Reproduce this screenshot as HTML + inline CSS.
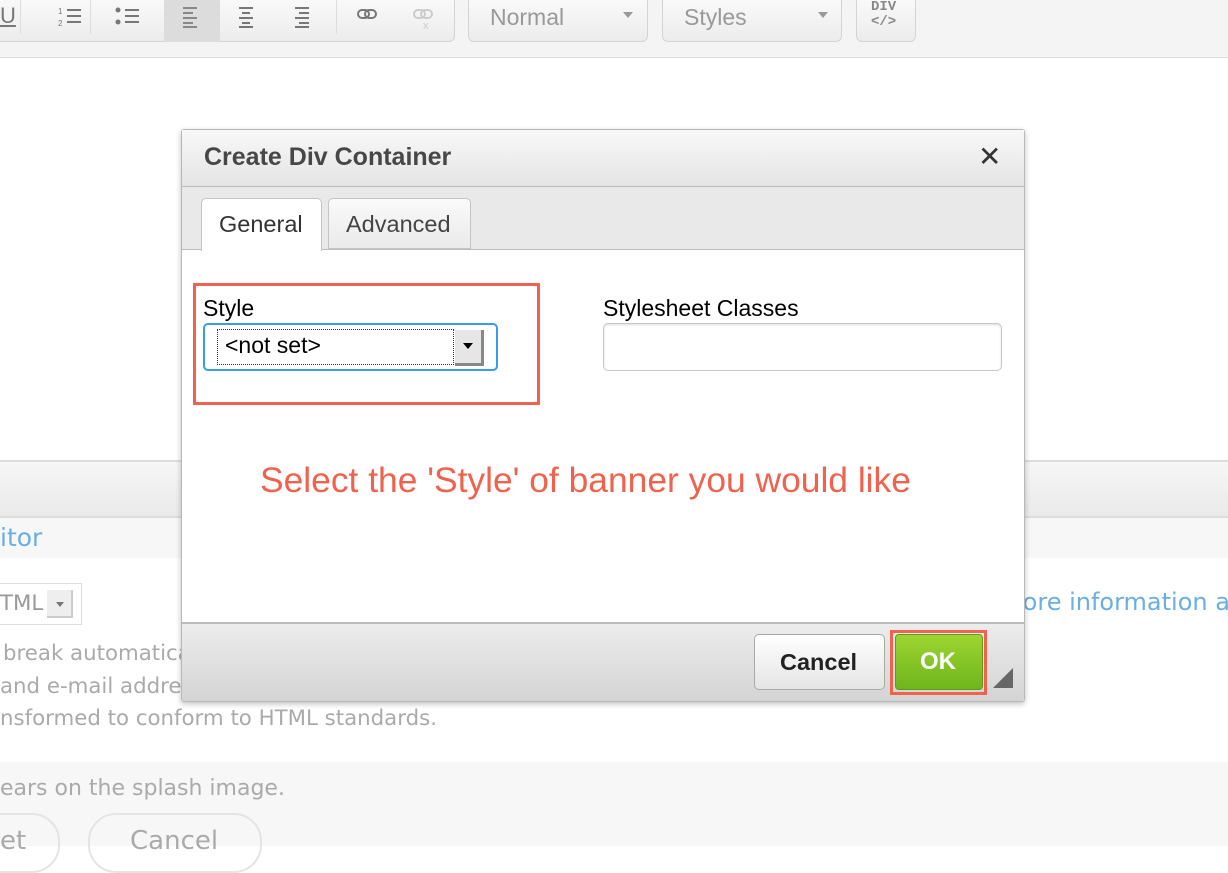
<!DOCTYPE html>
<html><head><style>
*{box-sizing:border-box;margin:0;padding:0}
body{width:1228px;height:846px;overflow:hidden;position:relative;background:#fff;font-family:"Liberation Sans",Arial,sans-serif}
.a{position:absolute}
.grp{position:absolute;top:-4px;height:46px;border:1px solid #d4d4d4;border-radius:0 0 6px 6px;background:linear-gradient(#fafafa,#ececec)}
.bg{color:#aaa;font-family:"DejaVu Sans",sans-serif;font-size:21.3px;white-space:nowrap}
</style></head><body>
<!-- toolbar -->
<div class="a" style="left:0;top:0;width:1228px;height:58px;background:#f4f4f4;border-bottom:1px solid #ddd"></div>
<div class="grp" style="left:-10px;width:465px"></div>
<div class="a" style="left:0;top:3px;font-size:22px;color:#777;text-decoration:underline">U</div>
<div class="a" style="left:20px;top:0;width:1px;height:34px;background:#ddd"></div>
<div class="a" style="left:90px;top:0;width:1px;height:34px;background:#ddd"></div>
<div class="a" style="left:164px;top:0;width:56px;height:42px;background:#dcdcdc"></div>
<div class="a" style="left:336px;top:0;width:1px;height:34px;background:#ddd"></div>
<svg class="a" style="left:55px;top:4px" width="400" height="26">
<g stroke="#777" stroke-width="2">
<path d="M12 6h14M12 12h14M12 18h14"/><path d="M70 6h14M70 12h14M70 18h14"/>
<path d="M128 4h14M128 9h10M128 14h14M128 19h10M128 23h14" stroke="#888"/>
<path d="M184 4h14M187 9h8M184 14h14M187 19h8M184 23h14"/>
<path d="M240 4h14M244 9h10M240 14h14M244 19h10M240 23h14"/>
</g>
<circle cx="63" cy="6" r="2.5" fill="#777"/><circle cx="63" cy="18" r="2.5" fill="#777"/>
<text x="3" y="10" font-size="8" fill="#777">1</text><text x="3" y="22" font-size="8" fill="#777">2</text>
<g fill="none" stroke="#777" stroke-width="2"><rect x="303" y="6" width="11" height="8" rx="4"/><rect x="310" y="6" width="11" height="8" rx="4"/></g>
<g fill="none" stroke="#ccc" stroke-width="2"><rect x="359" y="6" width="11" height="8" rx="4"/><rect x="366" y="6" width="11" height="8" rx="4"/></g>
<text x="368" y="25" font-size="11" fill="#ccc">x</text>
</svg>
<div class="grp" style="left:468px;width:180px"></div>
<div class="a" style="left:490px;top:4px;font-size:23px;color:#999">Normal</div>
<div class="a" style="left:623px;top:12px;border:5px solid transparent;border-top:6px solid #999"></div>
<div class="grp" style="left:662px;width:180px"></div>
<div class="a" style="left:684px;top:4px;font-size:23px;color:#999">Styles</div>
<div class="a" style="left:818px;top:12px;border:5px solid transparent;border-top:6px solid #999"></div>
<div class="grp" style="left:856px;width:60px"></div>
<div class="a" style="left:871px;top:0;font-size:14px;line-height:15px;color:#888;font-family:'Liberation Mono',monospace;text-align:center;font-weight:bold">DIV<br>&lt;/&gt;</div>
<!-- lower bg -->
<div class="a" style="left:0;top:460px;width:1228px;height:58px;background:linear-gradient(#f6f6f6,#eaeaea);border-top:2px solid #ddd;border-bottom:2px solid #ddd"></div>
<div class="a" style="left:0;top:518px;width:1228px;height:40px;background:#f7f7f7"></div>
<div class="a" style="left:0;top:523px;font-size:25px;color:#6aafe0;font-family:'DejaVu Sans',sans-serif">itor</div>
<div class="a" style="left:1016px;top:588px;font-size:24px;color:#6aafe0;font-family:'DejaVu Sans',sans-serif;white-space:nowrap">lore information a</div>
<div class="a" style="left:-4px;top:583px;width:86px;height:42px;border:1px solid #ddd"></div>
<div class="a bg" style="left:0;top:591px;color:#999">TML</div>
<div class="a" style="left:47px;top:590px;width:26px;height:28px;background:#eee;border-right:2px solid #ccc;border-bottom:2px solid #ccc"></div>
<div class="a" style="left:56px;top:602px;border:4px solid transparent;border-top:5px solid #777"></div>
<div class="a bg" style="left:3px;top:641px">break automatica</div>
<div class="a bg" style="left:0;top:674px">and e-mail addres</div>
<div class="a bg" style="left:0;top:706px">nsformed to conform to HTML standards.</div>
<div class="a" style="left:0;top:762px;width:1228px;height:84px;background:#f7f7f7"></div>
<div class="a bg" style="left:0;top:776px;font-size:22px">ears on the splash image.</div>
<div class="a" style="left:-60px;top:813px;width:120px;height:60px;border:2px solid #e4e4e4;border-radius:28px"></div>
<div class="a" style="left:88px;top:813px;width:174px;height:60px;border:2px solid #e4e4e4;border-radius:28px"></div>
<div class="a bg" style="left:0;top:826px;font-size:26px">et</div>
<div class="a bg" style="left:130px;top:826px;font-size:26px">Cancel</div>
<!-- dialog -->
<div class="a" style="left:181px;top:129px;width:844px;height:573px;border:1px solid #b8b8b8;box-shadow:0 2px 6px rgba(0,0,0,.25);background:#fff;border-radius:3px"></div>
<div class="a" style="left:182px;top:130px;width:842px;height:57px;background:linear-gradient(#f8f8f8,#e4e4e4);border-bottom:1px solid #bbb"></div>
<div class="a" style="left:204px;top:143px;font-size:25px;font-weight:bold;color:#474747;white-space:nowrap">Create Div Container</div>
<div class="a" style="left:978px;top:140px;font-size:28px;font-weight:bold;color:#333;font-family:'DejaVu Sans',sans-serif">✕</div>
<div class="a" style="left:182px;top:187px;width:842px;height:63px;background:#e9e9e9;border-bottom:1px solid #bbb"></div>
<div class="a" style="left:201px;top:198px;width:121px;height:53px;background:#fff;border:1px solid #c4c4c4;border-bottom:none;border-radius:5px 5px 0 0"></div>
<div class="a" style="left:219px;top:211px;font-size:23.5px;color:#333">General</div>
<div class="a" style="left:328px;top:198px;width:143px;height:51px;background:linear-gradient(#fafafa,#eaeaea);border:1px solid #c4c4c4;border-radius:5px 5px 0 0"></div>
<div class="a" style="left:346px;top:211px;font-size:23.5px;color:#444">Advanced</div>
<div class="a" style="left:193px;top:283px;width:347px;height:122px;border:3px solid #f0624d"></div>
<div class="a" style="left:203px;top:295px;font-size:23px;color:#000">Style</div>
<div class="a" style="left:203px;top:323px;width:295px;height:48px;border:2px solid #3a9be8;border-radius:5px"></div>
<div class="a" style="left:217px;top:329px;width:237px;height:36px;border:1px dotted #333"></div>
<div class="a" style="left:225px;top:332px;font-size:23px;color:#000">&lt;not set&gt;</div>
<div class="a" style="left:455px;top:330px;width:29px;height:36px;background:#e6e6e6;border-right:3px solid #888;border-bottom:3px solid #888"></div>
<div class="a" style="left:463px;top:343px;border:5px solid transparent;border-top:6px solid #000"></div>
<div class="a" style="left:603px;top:295px;font-size:23px;color:#000;white-space:nowrap">Stylesheet Classes</div>
<div class="a" style="left:603px;top:323px;width:399px;height:48px;border:1px solid #c8c8c8;border-radius:5px;box-shadow:inset 0 1px 2px #ddd"></div>
<div class="a" style="left:260px;top:460px;font-size:35.4px;color:#f0624d;white-space:nowrap">Select the 'Style' of banner you would like</div>
<div class="a" style="left:182px;top:622px;width:842px;height:79px;background:linear-gradient(#ececec,#d4d4d4);border-top:2px solid #bbb"></div>
<div class="a" style="left:754px;top:634px;width:131px;height:56px;border:1px solid #a9a9a9;border-radius:5px;background:linear-gradient(#fff,#e4e4e4)"></div>
<div class="a" style="left:780px;top:649px;font-size:23.5px;font-weight:bold;color:#222">Cancel</div>
<div class="a" style="left:890px;top:630px;width:97px;height:65px;border:3px solid #f0624d"></div>
<div class="a" style="left:895px;top:634px;width:88px;height:56px;border:1px solid #5e9a1a;border-radius:4px;background:linear-gradient(#9dd532,#6fb51c)"></div>
<div class="a" style="left:920px;top:648px;font-size:24px;font-weight:bold;color:#fff">OK</div>
<div class="a" style="left:993px;top:668px;width:0;height:0;border-left:20px solid transparent;border-bottom:20px solid #666"></div>
</body></html>
